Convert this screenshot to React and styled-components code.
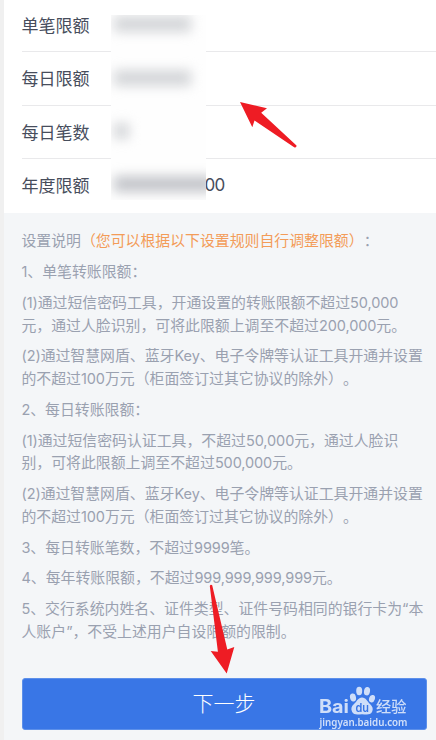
import React from 'react';
import styled, { createGlobalStyle } from 'styled-components';

const GlobalStyle = createGlobalStyle`
  body { margin: 0; overflow: hidden; background: #f4f6f8; }
  * { box-sizing: border-box; }
`;

const Screen = styled.main`
  position: relative;
  width: 436px;
  height: 740px;
  overflow: hidden;
  border-left: 4px solid #f0f0f0;
  background: #f4f6f8;
  font-family: 'Noto Sans CJK SC', sans-serif;
  font-weight: 400;
  text-spacing-trim: space-all;
`;

const Limits = styled.section`
  position: relative;
  height: 213px;
  padding-left: 17.5px;
  background: #fff;
`;

const LimitRow = styled.div`
  display: flex;
  align-items: center;
  height: ${(p) => p.$height}px;
  padding-bottom: ${(p) => p.$offset || 0}px;
  border-bottom: ${(p) => (p.$last ? 'none' : '1px solid #e9e9eb')};
  color: #474d5c;
  font-size: 17px;
  line-height: 24px;
`;

const LimitLabel = styled.span`
  width: 183px;
`;

const LimitTail = styled.span`
  font: 400 17px Inter, sans-serif;
  letter-spacing: -0.6px;
`;

const Mask = styled.div`
  position: absolute;
  left: 107px;
  top: 15px;
  width: 95px;
  height: 185px;
  overflow: hidden;
  background: #fefefe;
`;

const Smudge = styled.div`
  position: absolute;
  left: 3px;
  top: ${(p) => p.$top}px;
  width: ${(p) => p.$width}px;
  height: 16px;
  background: ${(p) => p.$color || '#d4d6d9'};
  filter: blur(6px);
`;

const Rules = styled.section`
  display: flex;
  flex-direction: column;
  gap: 8.1px;
  height: 465px;
  padding: 16.4px 0 0 17.5px;
  color: #9aa1b0;
  font-size: 14.88px;
  line-height: 22.7px;
`;

const Rule = styled.p`
  margin: 0;
`;

const Line = styled.span`
  display: block;
  height: 22.7px;
  white-space: nowrap;
`;

const Latin = styled.span`
  font-family: Inter, sans-serif;
  font-size: 14.5px;
  letter-spacing: -0.1px;
`;

const Highlight = styled.span`
  color: #f39c58;
`;

const NextButton = styled.button`
  display: flex;
  align-items: center;
  justify-content: center;
  width: 405px;
  height: 51.5px;
  margin: 0 0 0 17.5px;
  padding: 0 0 3px;
  border: 1px solid #5d90ea;
  border-radius: 3px;
  background: #3976e6;
  color: #fff;
  font: 300 21px/30px 'Noto Sans CJK SC', sans-serif;
`;

const Overlay = styled.svg`
  position: absolute;
  left: -4px;
  top: 0;
  width: 436px;
  height: 740px;
  pointer-events: none;
`;

const limits = [
  { label: '单笔限额', height: 52, offset: 2 },
  { label: '每日限额', height: 54, offset: 1 },
  { label: '每日笔数', height: 53, offset: 1 },
  { label: '年度限额', height: 54, offset: 2, tail: '00' },
];

const rules = [
  ['1、单笔转账限额：'],
  ['(1)通过短信密码工具，开通设置的转账限额不超过50,000', '元，通过人脸识别，可将此限额上调至不超过200,000元。'],
  ['(2)通过智慧网盾、蓝牙Key、电子令牌等认证工具开通并设置', '的不超过100万元（柜面签订过其它协议的除外）。'],
  ['2、每日转账限额：'],
  ['(1)通过短信密码认证工具，不超过50,000元，通过人脸识', '别，可将此限额上调至不超过500,000元。'],
  ['(2)通过智慧网盾、蓝牙Key、电子令牌等认证工具开通并设置', '的不超过100万元（柜面签订过其它协议的除外）。'],
  ['3、每日转账笔数，不超过9999笔。'],
  ['4、每年转账限额，不超过999,999,999,999元。'],
  ['5、交行系统内姓名、证件类型、证件号码相同的银行卡为“本', '人账户”，不受上述用户自设限额的限制。'],
];

const mixed = (text) =>
  text
    .split(/([\w(),.“”]+)/)
    .map((part, i) => (i % 2 ? <Latin key={i}>{part}</Latin> : part));

function Watermark() {
  return (
    <g fill="#fff" opacity="0.76">
      <text x="319" y="712.8" fontFamily="Inter, sans-serif" fontSize="18.5" fontWeight="700" textLength="30" lengthAdjust="spacingAndGlyphs">Bai</text>
      <ellipse cx="353" cy="697.5" rx="3" ry="4" transform="rotate(-12 353 697.5)" />
      <ellipse cx="359.2" cy="691" rx="3" ry="4.2" />
      <ellipse cx="367" cy="691.2" rx="3" ry="4.2" transform="rotate(10 367 691.2)" />
      <ellipse cx="372" cy="698.7" rx="2.9" ry="3.8" transform="rotate(18 372 698.7)" />
      <path d="M362 697.5c-4 0-5 4-8 6.5-2.7 2.3-3.4 5-1.8 8 1.8 3.3 5.5 2.4 9.8 2.2 4.5.2 8.3 1 10-2.2 1.5-3 .7-5.500-2-8-3-2.700-4-6.500-8-6.500z" />
      <text x="355.5" y="712.2" fill="#3976e6" fontFamily="Inter, sans-serif" fontSize="11.5" fontWeight="600" textLength="13.5" lengthAdjust="spacingAndGlyphs">du</text>
      <text x="376" y="712.3" fontFamily="Noto Sans CJK SC, sans-serif" fontSize="15.2" fontWeight="500">经验</text>
      <text x="319.5" y="725.8" fontFamily="Noto Sans, sans-serif" fontSize="10" fontWeight="600" textLength="88" lengthAdjust="spacingAndGlyphs">jingyan.baidu.com</text>
    </g>
  );
}

export default function App() {
  return (
    <>
      <GlobalStyle />
      <Screen>
        <Limits>
          {limits.map((row, i) => (
            <LimitRow key={row.label} $height={row.height} $offset={row.offset} $last={i === limits.length - 1}>
              <LimitLabel>{row.label}</LimitLabel>
              {row.tail && <LimitTail>{row.tail}</LimitTail>}
            </LimitRow>
          ))}
          <Mask>
            <Smudge $top={1} $width={77} />
            <Smudge $top={55} $width={77} />
            <Smudge $top={108} $width={15} />
            <Smudge $top={161} $width={100} $color="#c3c5ca" />
          </Mask>
        </Limits>
        <Rules>
          <Rule>
            <Line>设置说明<Highlight>（您可以根据以下设置规则自行调整限额）</Highlight>：</Line>
          </Rule>
          {rules.map((lines, i) => (
            <Rule key={i}>
              {lines.map((line) => <Line key={line}>{mixed(line)}</Line>)}
            </Rule>
          ))}
        </Rules>
        <NextButton type="button">下一步</NextButton>
        <Overlay viewBox="0 0 436 740" aria-hidden="true">
          <path fill="#ee1c24" d="M240 102l27 6.3-5.8 4.4L296.5 145.500q.3 2-2 2L254.500 120.500 252.300 127.200z" />
          <path fill="#ee1c24" d="M226.700 673.500L210.700 651l7.200.8L209.800 586q.8-2 2.400-.7L227.300 649.500l7-2.500z" />
          <Watermark />
        </Overlay>
      </Screen>
    </>
  );
}
